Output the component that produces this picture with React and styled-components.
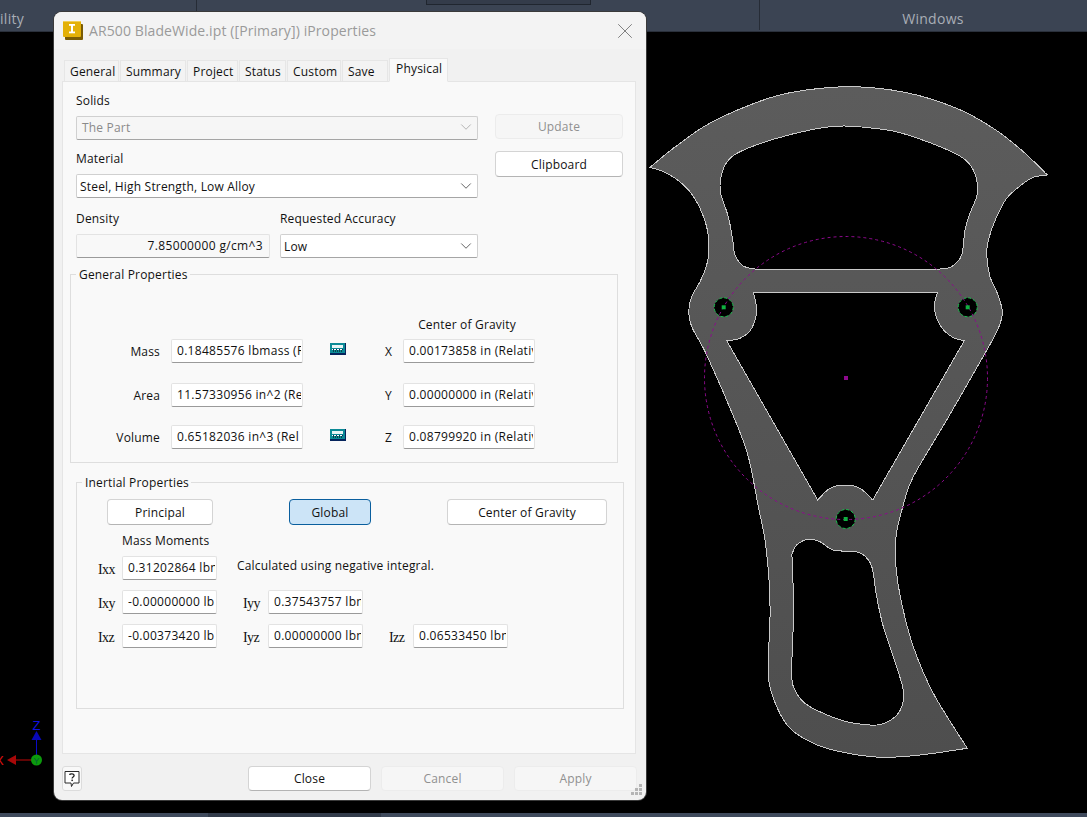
import React from 'react';
import styled, { createGlobalStyle, css } from 'styled-components';
import { ChevronDown, X } from 'lucide-react';

const UI = `"Open Sans", "Noto Sans", sans-serif`;

const Global = createGlobalStyle`
  html, body { margin: 0; padding: 0; background: #000; }
  body { width: 1087px; height: 817px; overflow: hidden; font-family: ${UI}; }
  * { box-sizing: border-box; }
`;

const Page = styled.div`
  position: relative;
  width: 1087px;
  height: 817px;
  display: grid;
  grid-template-rows: 32px 781px 4px;
  background: #000;
`;

const Ribbon = styled.header`
  display: grid;
  grid-template-columns: 197px 229px 165px 169px 327px;
  background: #3b4453;
  border-bottom: 1px solid #2a303b;
  color: #a9aeb6;
  font-size: 14px;
  letter-spacing: 0.3px;
`;
const RibbonCell = styled.div`
  height: 30px;
  border-right: ${p => (p.$rule ? '1px solid #262c36' : '0')};
  display: flex;
  align-items: flex-end;
  justify-content: ${p => (p.$center ? 'center' : 'flex-start')};
  padding-left: ${p => (p.$center ? '19px' : '0')};
  padding-bottom: 2px;
  line-height: 18px;
`;
const TopBox = styled.div`
  align-self: flex-start;
  width: 100%;
  height: 6px;
  margin-top: -1px;
  border: 1px solid #20262f;
  background: #343c4a;
`;
const Viewport = styled.main`
  background: #000;
  overflow: hidden;
`;
const Canvas = styled.svg`
  display: block;
  width: 1087px;
  height: 781px;
`;
const StatusBar = styled.footer`
  display: grid;
  grid-template-columns: 208px 173px 1fr;
  background: #3f4a5c;
`;
const StatusDark = styled.div`
  grid-column: 2;
  background: #323b4a;
`;

const Dialog = styled.section`
  position: absolute;
  left: 54px;
  top: 12px;
  width: 592px;
  height: 788px;
  border-radius: 8px;
  background: #f1f1f1;
  box-shadow: 0 0 0 1px #3a3a3a;
  display: flex;
  flex-direction: column;
  overflow: hidden;
  color: #111;
  font-size: 12px;
  letter-spacing: 0.18px;
`;
const TitleBar = styled.div`
  height: 37px;
  flex: none;
  background: #f3f3f3;
  display: flex;
  align-items: center;
  padding: 0 8px 0 9px;
`;
const TitleText = styled.div`
  margin-left: 6px;
  flex: 1;
  color: #9a9a9a;
  font-size: 14px;
  letter-spacing: 0.1px;
  white-space: nowrap;
  line-height: 20px;
`;
const TabStrip = styled.nav`
  height: 32px;
  flex: none;
  margin-left: 10px;
  display: flex;
  align-items: flex-end;
  gap: 1px;
  position: relative;
  z-index: 1;
`;
const Tab = styled.div`
  width: ${p => p.$w}px;
  height: ${p => (p.$active ? 24 : 21)}px;
  display: flex;
  align-items: center;
  padding-left: ${p => (p.$active ? '6px' : '5px')};
  padding-top: ${p => (p.$active ? '0' : '1px')};
  padding-bottom: ${p => (p.$active ? '3px' : '0')};
  background: ${p => (p.$active ? '#f9f9f9' : '#f3f3f3')};
  border: 1px solid #e6e6e6;
  border-bottom: ${p => (p.$active ? '1px solid #f9f9f9' : '0')};
  margin-bottom: ${p => (p.$active ? '-1px' : '0')};
  white-space: nowrap;
`;
const Panel = styled.div`
  width: 574px;
  height: 673px;
  flex: none;
  margin-left: 8px;
  background: #f9f9f9;
  border: 1px solid #e5e5e5;
  padding: 0 13px;
  display: flex;
  flex-direction: column;
`;
const Label = styled.div`
  line-height: 16px;
  white-space: nowrap;
`;
const fieldBase = css`
  background: #fff;
  border: 1px solid #e3e3e3;
  border-bottom-color: #9a9a9a;
  border-radius: 2px;
  display: flex;
  align-items: center;
  white-space: nowrap;
  overflow: hidden;
`;
const Field = styled.div`
  ${fieldBase};
  width: ${p => p.$w}px;
  height: 24px;
  padding: 0 1px 1px 5px;
  letter-spacing: 0.3px;
`;
const FieldClip = styled.span`
  display: block;
  width: 100%;
  overflow: hidden;
`;
const ReadOut = styled.div`
  ${fieldBase};
  width: 194px;
  height: 24px;
  background: #f8f8f8;
  justify-content: flex-end;
  padding: 0 6px 1px 0;
  letter-spacing: 0.35px;
`;
const Combo = styled.div`
  ${fieldBase};
  width: ${p => p.$w}px;
  height: 24px;
  justify-content: space-between;
  padding: 0 2px ${p => (p.$disabled ? '2px' : '0')} ${p => (p.$disabled ? '5px' : '3px')};
  border-color: #d0d0d0;
  border-bottom-color: #a5a5a5;
  color: ${p => (p.$disabled ? '#8a8a8a' : '#111')};
  background: ${p => (p.$disabled ? '#f6f6f6' : '#fff')};
  svg { color: ${p => (p.$disabled ? '#a5a5a5' : '#444')}; }
`;
const Button = styled.div`
  width: ${p => p.$w}px;
  height: ${p => p.$h || 26}px;
  border-radius: 4px;
  display: flex;
  align-items: center;
  justify-content: center;
  white-space: nowrap;
  background: ${p => (p.$selected ? '#cce4f7' : p.$disabled ? '#f6f6f6' : '#fff')};
  border: 1px solid ${p => (p.$selected ? '#0a5f9e' : p.$disabled ? '#ececec' : '#d4d4d4')};
  border-bottom-color: ${p => (p.$selected ? '#0a5f9e' : p.$disabled ? '#ececec' : '#b4b4b4')};
  color: ${p => (p.$disabled ? '#909090' : '#111')};
`;
const TopForm = styled.div`
  display: grid;
  grid-template-columns: 402px 17px 128px;
  margin-top: 11px;
`;
const LeftCol = styled.div`
  display: flex;
  flex-direction: column;
`;
const RightCol = styled.div`
  display: flex;
  flex-direction: column;
  gap: 12px;
  padding-top: 21px;
`;
const LabelledRow = styled.div`
  display: flex;
  flex-direction: column;
  gap: 7px;
  margin-top: ${p => p.$top || 0}px;
`;
const DensityRow = styled.div`
  display: grid;
  grid-template-columns: 194px 198px;
  column-gap: 10px;
  row-gap: 7px;
  margin-top: 13px;
`;
const Group = styled.section`
  position: relative;
  margin: ${p => p.$margin};
  width: ${p => p.$w}px;
  height: ${p => p.$h}px;
  flex: none;
  border: 1px solid #dedede;
`;
const GroupTitle = styled.div`
  position: absolute;
  top: -8px;
  left: ${p => p.$left}px;
  background: #f9f9f9;
  padding: 0 2px 0 3px;
  line-height: 16px;
  white-space: nowrap;
`;
const GenHead = styled.div`
  padding-left: 330px;
  height: 16px;
  margin-top: 42px;
  margin-bottom: -2px;
  line-height: 16px;
  display: flex;
`;
const GenHeadText = styled.span`
  width: 132px;
  text-align: center;
  white-space: nowrap;
`;
const GenRow = styled.div`
  display: grid;
  grid-template-columns: 89px 11px 132px 27px 16px 38px 9px 10px 132px;
  align-items: center;
  height: 24px;
  margin-top: ${p => p.$top || 0}px;
`;
const RowLabel = styled.div`
  text-align: right;
  white-space: nowrap;
  line-height: 16px;
  padding-top: 2px;
`;
const AxisLabel = styled.div`
  text-align: center;
  padding-top: 2px;
  line-height: 16px;
`;
const Spacer = styled.span``;
const InertButtons = styled.div`
  display: grid;
  grid-template-columns: 106px 76px 82px 76px 160px;
  padding: 16px 0 0 30px;
`;
const MomentsHead = styled.div`
  margin: 8px 0 7px 45px;
  line-height: 16px;
`;
const MomentsWrap = styled.div`
  display: grid;
  grid-template-columns: 25px 95px 25px 26px 95px 25px 25px 95px;
  grid-template-rows: 24px 24px 24px;
  row-gap: 10px;
  padding-left: 20px;
`;
const Moment = styled.div`
  grid-column: ${p => p.$col};
  grid-row: ${p => p.$row};
`;
const MomentLabel = styled.div`
  grid-column: ${p => p.$col};
  grid-row: ${p => p.$row};
  font-family: "Liberation Serif", serif;
  font-size: 14px;
  padding: 6px 0 0 1px;
  line-height: 16px;
  letter-spacing: -0.6px;
`;
const Note = styled.div`
  grid-column: 3 / span 6;
  grid-row: 1;
  padding: 2px 0 0 20px;
  line-height: 16px;
  white-space: nowrap;
`;
const Footer = styled.div`
  flex: 1;
  display: grid;
  grid-template-columns: 176px 123px 123px 123px;
  column-gap: 10px;
  padding: 12px 0 0 8px;
  position: relative;
`;
const HelpBtn = styled.div`
  width: 20px;
  height: 25px;
  border: 1px solid #dcdcdc;
  border-radius: 3px;
  background: #f8f8f8;
  display: flex;
  align-items: center;
  justify-content: center;
`;
const Grip = styled.svg`
  position: absolute;
  right: 2px;
  bottom: 2px;
  width: 14px;
  height: 14px;
`;
const CalcSvg = styled.svg`
  display: block;
  margin-bottom: 4px;
`;

const AppIcon = () => (
  <svg width="20" height="19" viewBox="0 0 20 19">
    <rect x="2" y="3" width="18" height="16" rx="1" fill="#7a5c05" />
    <rect x="0" y="0" width="18" height="16" rx="1" fill="#e3b007" />
    <rect x="0" y="0" width="18" height="1" fill="#f0cd55" />
    <rect x="6" y="3" width="6" height="1.8" fill="#fff" />
    <rect x="6" y="10.5" width="6" height="1.8" fill="#fff" />
    <rect x="8" y="3" width="2" height="9" fill="#fff" />
  </svg>
);

const CalcIcon = () => (
  <CalcSvg width="16" height="12" viewBox="0 0 16 12">
    <rect x="0" y="0" width="16" height="12" fill="#0c8a96" />
    <rect x="0" y="10" width="16" height="2" fill="#06245c" />
    <rect x="15" y="0" width="1" height="12" fill="#06245c" />
    <rect x="2" y="2" width="11" height="3" fill="#e8f4f6" />
    <rect x="2" y="6" width="11" height="1" fill="#fff" />
    <path d="M3 8h1M5 8h1M7 8h1M9 8h1M11 8h1" stroke="#000" strokeWidth="1" />
    <path d="M3 6.5h1M6 6.5h1M9 6.5h1M12 6.5h1" stroke="#0b2a5c" strokeWidth="1" />
  </CalcSvg>
);

const HelpIcon = () => (
  <svg width="16" height="18" viewBox="0 0 16 18">
    <path d="M1 1.5h14v11.5H9.5L7.5 16.5 7 13H1z" fill="#fff" stroke="#2b2b2b" strokeWidth="1" />
    <path d="M5.5 4.8c.3-1.2 4.6-1.5 4.6.8 0 1.4-2 1.5-2 3" fill="none" stroke="#222" strokeWidth="1.3" />
    <rect x="7.4" y="9.6" width="1.5" height="1.5" fill="#222" />
  </svg>
);

/* Traced in two crops of the drawing: each is mapped back to page pixels. */
const upper = pts => pts.map(([x, y]) => [640 + x / 3, 80 + y / 3]);
const lower = pts => pts.map(([x, y]) => [680 + x / 3, 420 + y / 3]);

/* Catmull-Rom through the traced points, so the outlines stay smooth. */
const through = pts => {
  let d = '';
  for (let i = 0; i < pts.length - 1; i++) {
    const p0 = pts[i - 1] || pts[i];
    const p1 = pts[i];
    const p2 = pts[i + 1];
    const p3 = pts[i + 2] || p2;
    const c1 = [p1[0] + (p2[0] - p0[0]) / 6, p1[1] + (p2[1] - p0[1]) / 6];
    const c2 = [p2[0] - (p3[0] - p1[0]) / 6, p2[1] - (p3[1] - p1[1]) / 6];
    d += `C${c1[0].toFixed(1)} ${c1[1].toFixed(1)} ${c2[0].toFixed(1)} ${c2[1].toFixed(1)} ${p2[0].toFixed(1)} ${p2[1].toFixed(1)}`;
  }
  return d;
};
const chain = (...runs) => `M${runs[0][0][0].toFixed(1)} ${runs[0][0][1].toFixed(1)}` + runs.map(through).join('') + 'Z';

const outer = chain(
  upper([[30, 262], [100, 205], [200, 135], [330, 75], [450, 38], [630, 20], [800, 38], [950, 85], [1060, 145], [1150, 215], [1222, 285]]),
  [
    ...upper([[1222, 285], [1180, 292], [1140, 318], [1100, 355], [1070, 410], [1048, 470], [1040, 520], [1050, 590], [1072, 640], [1087, 695], [1075, 745], [1035, 820]]),
    ...lower([[800, 0], [700, 170], [670, 255], [648, 350], [648, 440], [665, 550], [700, 680], [760, 820], [862, 985]])
  ],
  lower([[862, 985], [720, 1005], [600, 1012], [480, 995], [400, 970], [330, 925], [290, 860], [266, 780], [266, 690], [270, 600], [268, 490], [255, 360], [235, 260], [205, 110], [165, 0]]).concat(
    upper([[200, 825], [155, 740], [146, 695], [155, 650], [180, 605], [200, 555], [207, 500], [200, 440], [180, 385], [150, 335], [110, 298], [70, 275], [30, 262]])
  )
);
const topHole = chain(
  upper([[345, 567], [900, 567]]),
  upper([[900, 567], [935, 560], [965, 525], [975, 450], [990, 400], [1010, 350], [1012, 310], [1000, 270], [970, 235], [900, 200], [780, 158], [700, 145], [610, 138], [520, 148], [400, 178], [300, 215], [262, 245], [243, 290], [242, 340], [265, 410], [278, 480], [285, 525], [310, 558], [345, 567]])
);
const midHole = chain(
  upper([[340, 637], [893, 637]]),
  upper([[893, 637], [883, 680], [900, 735], [935, 770], [973, 782]]),
  [...upper([[973, 782]]), ...lower([[578, 240]])],
  lower([[578, 240], [540, 205], [495, 195], [450, 205], [413, 240]]),
  [...lower([[413, 240]]), ...upper([[260, 782]])],
  upper([[260, 782], [300, 775], [335, 745], [350, 690], [340, 637]])
);
const lowHole = chain(
  lower([[335, 405], [350, 375], [385, 358], [420, 365], [460, 390], [535, 397], [565, 420], [578, 450], [590, 530], [610, 620], [640, 710], [670, 810], [665, 860], [640, 895], [590, 915], [500, 905], [430, 880], [375, 850], [345, 810], [335, 760], [340, 600], [338, 440], [335, 405]])
);

const pivots = [[723.7, 307.3], [967.7, 307.3], [845.7, 519]];

const Part = () => (
  <Canvas viewBox="0 32 1087 781">
    <defs>
      <linearGradient id="steel" x1="0" y1="0" x2="0" y2="1">
        <stop offset="0" stopColor="#5c5c5c" />
        <stop offset="1" stopColor="#4e4e4e" />
      </linearGradient>
    </defs>
    <path d={`${outer}${topHole}${midHole}${lowHole}`} fill="url(#steel)" fillRule="evenodd" stroke="#c9c9c9" strokeWidth="1" shapeRendering="crispEdges" />
    {pivots.map(([x, y]) => (
      <circle key={x} cx={x} cy={y} r="9.5" fill="#000" stroke="#14c24a" strokeWidth="1" strokeDasharray="3 2" />
    ))}
    <circle cx="846" cy="378" r="141.5" fill="none" stroke="#8e0a8e" strokeWidth="1" strokeDasharray="3 3" />
    {pivots.map(([x, y]) => (
      <rect key={x} x={x - 2} y={y - 2} width="4" height="4" fill="#10b040" />
    ))}
    <rect x="844" y="376" width="4" height="4" fill="#8e0a8e" />
    <g fontFamily="'Liberation Sans', sans-serif">
      <line x1="36.5" y1="740" x2="36.5" y2="756" stroke="#0a0ac8" />
      <polygon points="36.5,731 41.5,740 31.5,740" fill="#0808b8" />
      <text x="36.5" y="729.5" textAnchor="middle" fontSize="13" fill="#1010e0">Z</text>
      <line x1="16" y1="760" x2="32" y2="760" stroke="#c00808" />
      <polygon points="7,760 16,755 16,765" fill="#a80808" />
      <text x="-5" y="764.5" fontSize="13" fill="#e01010">X</text>
      <circle cx="36.5" cy="760" r="5.5" fill="#0c9a0c" />
      <text x="36.5" y="763.5" textAnchor="middle" fontSize="9" fill="#063">Y</text>
    </g>
  </Canvas>
);

const tabs = [['General', 55], ['Summary', 66], ['Project', 51], ['Status', 47], ['Custom', 54], ['Save', 46]];

const Chevron = () => <ChevronDown size={18} strokeWidth={1.1} />;

const Value = ({ w = 132, children }) => <Field $w={w}><FieldClip>{children}</FieldClip></Field>;

export default function App() {
  return (
    <Page>
      <Global />
      <Ribbon>
        <RibbonCell $rule>ility</RibbonCell>
        <RibbonCell />
        <RibbonCell><TopBox /></RibbonCell>
        <RibbonCell $rule />
        <RibbonCell $center>Windows</RibbonCell>
      </Ribbon>
      <Viewport><Part /></Viewport>
      <StatusBar><StatusDark /></StatusBar>

      <Dialog>
        <TitleBar>
          <AppIcon />
          <TitleText>AR500 BladeWide.ipt ([Primary]) iProperties</TitleText>
          <X size={26} strokeWidth={0.9} color="#7d7d7d" />
        </TitleBar>
        <TabStrip>
          {tabs.map(([t, w]) => <Tab key={t} $w={w}>{t}</Tab>)}
          <Tab $active $w={59}>Physical</Tab>
        </TabStrip>
        <Panel>
          <TopForm>
            <LeftCol>
              <LabelledRow>
                <Label>Solids</Label>
                <Combo $w={402} $disabled>The Part<Chevron /></Combo>
              </LabelledRow>
              <LabelledRow $top={11}>
                <Label>Material</Label>
                <Combo $w={402}>Steel, High Strength, Low Alloy<Chevron /></Combo>
              </LabelledRow>
              <DensityRow>
                <Label>Density</Label>
                <Label>Requested Accuracy</Label>
                <ReadOut>7.85000000 g/cm^3</ReadOut>
                <Combo $w={198}>Low<Chevron /></Combo>
              </DensityRow>
            </LeftCol>
            <Spacer />
            <RightCol>
              <Button $w={128} $h={25} $disabled>Update</Button>
              <Button $w={128} $h={26}>Clipboard</Button>
            </RightCol>
          </TopForm>

          <Group $w={548} $h={189} $margin="16px 0 0 -6px">
            <GroupTitle $left={5}>General Properties</GroupTitle>
            <GenHead>
              <GenHeadText>Center of Gravity</GenHeadText>
            </GenHead>
            <GenRow $top={8}>
              <RowLabel>Mass</RowLabel>
              <Spacer />
              <Value>0.18485576 lbmass (R</Value>
              <Spacer />
              <CalcIcon />
              <Spacer />
              <AxisLabel>X</AxisLabel>
              <Spacer />
              <Value>0.00173858 in (Relativ</Value>
            </GenRow>
            <GenRow $top={20}>
              <RowLabel>Area</RowLabel>
              <Spacer />
              <Value>11.57330956 in^2 (Re</Value>
              <Spacer />
              <Spacer />
              <Spacer />
              <AxisLabel>Y</AxisLabel>
              <Spacer />
              <Value>0.00000000 in (Relativ</Value>
            </GenRow>
            <GenRow $top={18}>
              <RowLabel>Volume</RowLabel>
              <Spacer />
              <Value>0.65182036 in^3 (Rel</Value>
              <Spacer />
              <CalcIcon />
              <Spacer />
              <AxisLabel>Z</AxisLabel>
              <Spacer />
              <Value>0.08799920 in (Relativ</Value>
            </GenRow>
          </Group>

          <Group $w={548} $h={227} $margin="19px 0 0 0">
            <GroupTitle $left={5}>Inertial Properties</GroupTitle>
            <InertButtons>
              <Button $w={106}>Principal</Button>
              <Spacer />
              <Button $w={82} $selected>Global</Button>
              <Spacer />
              <Button $w={160}>Center of Gravity</Button>
            </InertButtons>
            <MomentsHead>Mass Moments</MomentsHead>
            <MomentsWrap>
              <MomentLabel $col={1} $row={1}>Ixx</MomentLabel>
              <Moment $col={2} $row={1}><Value w={95}>0.31202864 lbm</Value></Moment>
              <Note>Calculated using negative integral.</Note>
              <MomentLabel $col={1} $row={2}>Ixy</MomentLabel>
              <Moment $col={2} $row={2}><Value w={95}>-0.00000000 lb</Value></Moment>
              <MomentLabel $col={4} $row={2}>Iyy</MomentLabel>
              <Moment $col={5} $row={2}><Value w={95}>0.37543757 lbm</Value></Moment>
              <MomentLabel $col={1} $row={3}>Ixz</MomentLabel>
              <Moment $col={2} $row={3}><Value w={95}>-0.00373420 lb</Value></Moment>
              <MomentLabel $col={4} $row={3}>Iyz</MomentLabel>
              <Moment $col={5} $row={3}><Value w={95}>0.00000000 lbm</Value></Moment>
              <MomentLabel $col={7} $row={3}>Izz</MomentLabel>
              <Moment $col={8} $row={3}><Value w={95}>0.06533450 lbm</Value></Moment>
            </MomentsWrap>
          </Group>
        </Panel>
        <Footer>
          <HelpBtn><HelpIcon /></HelpBtn>
          <Button $w={123} $h={25}>Close</Button>
          <Button $w={123} $h={25} $disabled>Cancel</Button>
          <Button $w={123} $h={25} $disabled>Apply</Button>
          <Grip viewBox="0 0 14 14">
            <g fill="#b5b5b5">
              <rect x="9" y="0" width="3" height="3" />
              <rect x="5" y="4" width="3" height="3" />
              <rect x="9" y="4" width="3" height="3" />
              <rect x="1" y="8" width="3" height="3" />
              <rect x="5" y="8" width="3" height="3" />
              <rect x="9" y="8" width="3" height="3" />
            </g>
          </Grip>
        </Footer>
      </Dialog>
    </Page>
  );
}
